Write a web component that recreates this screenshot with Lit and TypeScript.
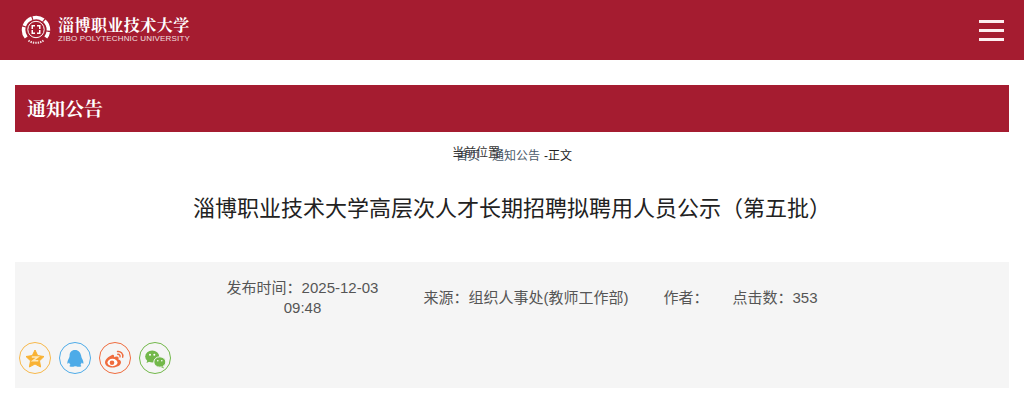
import { LitElement, html, css } from "lit";
import { customElement } from "lit/decorators.js";

@customElement("app-root")
export class AppRoot extends LitElement {
  static styles = css`
    :host { display: block; font-family: "Liberation Sans", "Noto Sans CJK SC", sans-serif; background: #fff; height: 400px; overflow: hidden; }
    .top { height: 60px; background: #a51c30; display: flex; align-items: center; justify-content: space-between; padding: 0 20px 0 21px; }
    .brand { display: flex; align-items: center; gap: 7px; color: #fff; }
    .brand-text { display: flex; flex-direction: column; padding-bottom: 1px; }
    .cn { font-family: "Noto Serif CJK SC", "Noto Sans CJK SC", serif; font-weight: 700; font-size: 16px; line-height: 18px; letter-spacing: 0.45px; white-space: nowrap; }
    .en { font-size: 8px; line-height: 10px; letter-spacing: 0.17px; white-space: nowrap; opacity: .85; }
    .burger { display: flex; flex-direction: column; gap: 6px; width: 25px; }
    .burger span { height: 3px; background: #fdeef0; display: block; }
    .main { padding: 25px 15px 0; }
    .bar { height: 47px; background: #a51c30; color: #fff; display: flex; align-items: center; padding: 0 0 2px 12px; box-sizing: border-box; font-family: "Noto Serif CJK SC", "Noto Sans CJK SC", serif; font-weight: 700; font-size: 19px; }
    .crumb { height: 46px; box-sizing: border-box; padding: 0 0 2px 441px; display: flex; align-items: center; font-size: 12px; color: #222; position: relative; }
    .crumb .here { position: absolute; left: 437px; top: 12px; font-size: 12px; line-height: 18px; color: #333; }
    .crumb .link { color: #4a5a6a; }
    .crumb .home { margin-right: 12px; }
    .crumb .now { margin-left: 4px; }
    .title { margin: 0; text-align: center; font-weight: 400; font-size: 22px; line-height: 32px; color: #222; padding-top: 15px; height: 69px; }
    .meta { background: #f5f5f5; height: 126px; display: flex; flex-direction: column; }
    .row { display: flex; justify-content: center; align-items: center; height: 72px; padding-left: 8px; box-sizing: border-box; font-size: 15px; line-height: 20px; color: #555; }
    .date { width: 176px; text-align: center; margin-right: 33px; }
    .src { margin-right: 35px; }
    .author { margin-right: 33px; width: 36px; white-space: nowrap; }
    .share { display: flex; gap: 8px; padding: 8px 0 0 4px; }
    .ic { width: 32px; height: 32px; display: block; }
  `;

  render() {
    return html`
      <div class="top">
        <div class="brand">
          <svg width="30" height="30" viewBox="0 0 30 30" fill="none">
            <path d="M5.2 22.5A12.4 12.4 0 1 1 24.8 22.5" stroke="#fff" stroke-width="3.6" stroke-dasharray="11 1.2"></path>
            <circle cx="15" cy="14.5" r="8.2" stroke="#fff" stroke-width="1"></circle>
            <path d="M7.5 25.5C11 28.5 19 28.5 22.5 25.5" stroke="#fff" stroke-width="2" stroke-dasharray="1.4 1" opacity=".85"></path>
            <path d="M10.5 10h3.5v1.5h-2V14h-1.500zM16 10h3.500v4H18v-2.500h-2zM10.500 15H12v2.500h2V19h-3.500zM18 15h1.500v4H16v-1.500h2z" fill="#fff"></path>
          </svg>
          <div class="brand-text">
            <span class="cn">淄博职业技术大学</span>
            <span class="en">ZIBO POLYTECHNIC UNIVERSITY</span>
          </div>
        </div>
        <div class="burger"><span></span><span></span><span></span></div>
      </div>
      <div class="main">
        <div class="bar">通知公告</div>
        <div class="crumb">
          <span class="here">当前位置:</span>
          <span class="link home">首页</span><span class="link">通知公告</span><span class="now">-正文</span>
        </div>
        <h1 class="title">淄博职业技术大学高层次人才长期招聘拟聘用人员公示（第五批）</h1>
        <div class="meta">
          <div class="row">
            <span class="date">发布时间：2025-12-03 09:48</span>
            <span class="src">来源：组织人事处(教师工作部)</span>
            <span class="author">作者：</span>
            <span>点击数：353</span>
          </div>
          <div class="share">
            <svg class="ic" viewBox="0 0 32 32" fill="none"><circle cx="16" cy="16" r="15.500" stroke="#f7b84b"></circle><path d="M16 8l2.700 5.600 6.300.9-4.500 4.300 1.100 6.200-5.600-3-5.600 3 1.100-6.200-4.500-4.300 6.300-.9z" fill="#f9b233" stroke="#f9b233" stroke-width="1" stroke-linejoin="round"></path><path d="M12.800 15h6l-5 3.800h5.500" stroke="#fde9bd" stroke-width="1.500"></path></svg>
            <svg class="ic" viewBox="0 0 32 32" fill="none"><circle cx="16" cy="16" r="15.500" stroke="#4dabe8"></circle><path d="M16 8c-3.700 0-5.400 2.700-5.400 5.800 0 1-.2 1.600-.8 2.600-1 1.700-1.600 3.300-1.400 4.800.2 1 .9.600 1.600-.6.300 1 .8 1.800 1.500 2.400-1 .4-1.300 1.200-.6 1.500 1.200.5 3.600.4 4.800-.2h1.400c1.200.6 3.600.7 4.800.2.700-.3.400-1.100-.6-1.500.7-.6 1.200-1.400 1.500-2.400.7 1.200 1.400 1.600 1.600.6.200-1.500-.4-3.100-1.400-4.800-.6-1-.8-1.600-.8-2.600C21.400 10.700 19.700 8 16 8z" fill="#4dabe8"></path></svg>
            <svg class="ic" viewBox="0 0 32 32" fill="none"><circle cx="16" cy="16" r="15.500" stroke="#ef6c3e"></circle><path d="M13 13c-3.700 1.500-7 4.500-7 7.500 0 3 3.600 5 7.500 5 4.800 0 8.500-2.500 8.500-5.300 0-1.900-1.700-2.500-2.600-2.700.7-1.700 0-3-1.600-3-1 0-2 .4-2.700.7.300-1.500-.300-3.100-2.100-2.200z" fill="#ef6c3e"></path><ellipse cx="13.500" cy="20.500" rx="5" ry="3.700" fill="#fff"></ellipse><circle cx="13" cy="20.700" r="2.300" fill="#ef6c3e"></circle><path d="M18.500 9.500c3-.5 6 2.200 5.200 5.700M18.800 12.300c1.500-.2 2.600 1 2.200 2.600" stroke="#ef6c3e" stroke-width="1.400" stroke-linecap="round"></path></svg>
            <svg class="ic" viewBox="0 0 32 32" fill="none"><circle cx="16" cy="16" r="15.500" stroke="#72b84a"></circle><ellipse cx="13.200" cy="14.500" rx="7" ry="6" fill="#72b84a"></ellipse><path d="M8.500 18l-1 3 3.200-1.600z" fill="#72b84a"></path><ellipse cx="20.800" cy="20" rx="6" ry="5.200" fill="#72b84a" stroke="#f5f5f5" stroke-width="1"></ellipse><path d="M23.800 24.200l1.300 2.300-3.200-1.400z" fill="#72b84a"></path><circle cx="11" cy="12.800" r="1" fill="#fff"></circle><circle cx="15.300" cy="12.800" r="1" fill="#fff"></circle><circle cx="18.800" cy="18.800" r=".8" fill="#fff"></circle><circle cx="22.800" cy="18.800" r=".8" fill="#fff"></circle></svg>
          </div>
        </div>
      </div>
    `;
  }
}
